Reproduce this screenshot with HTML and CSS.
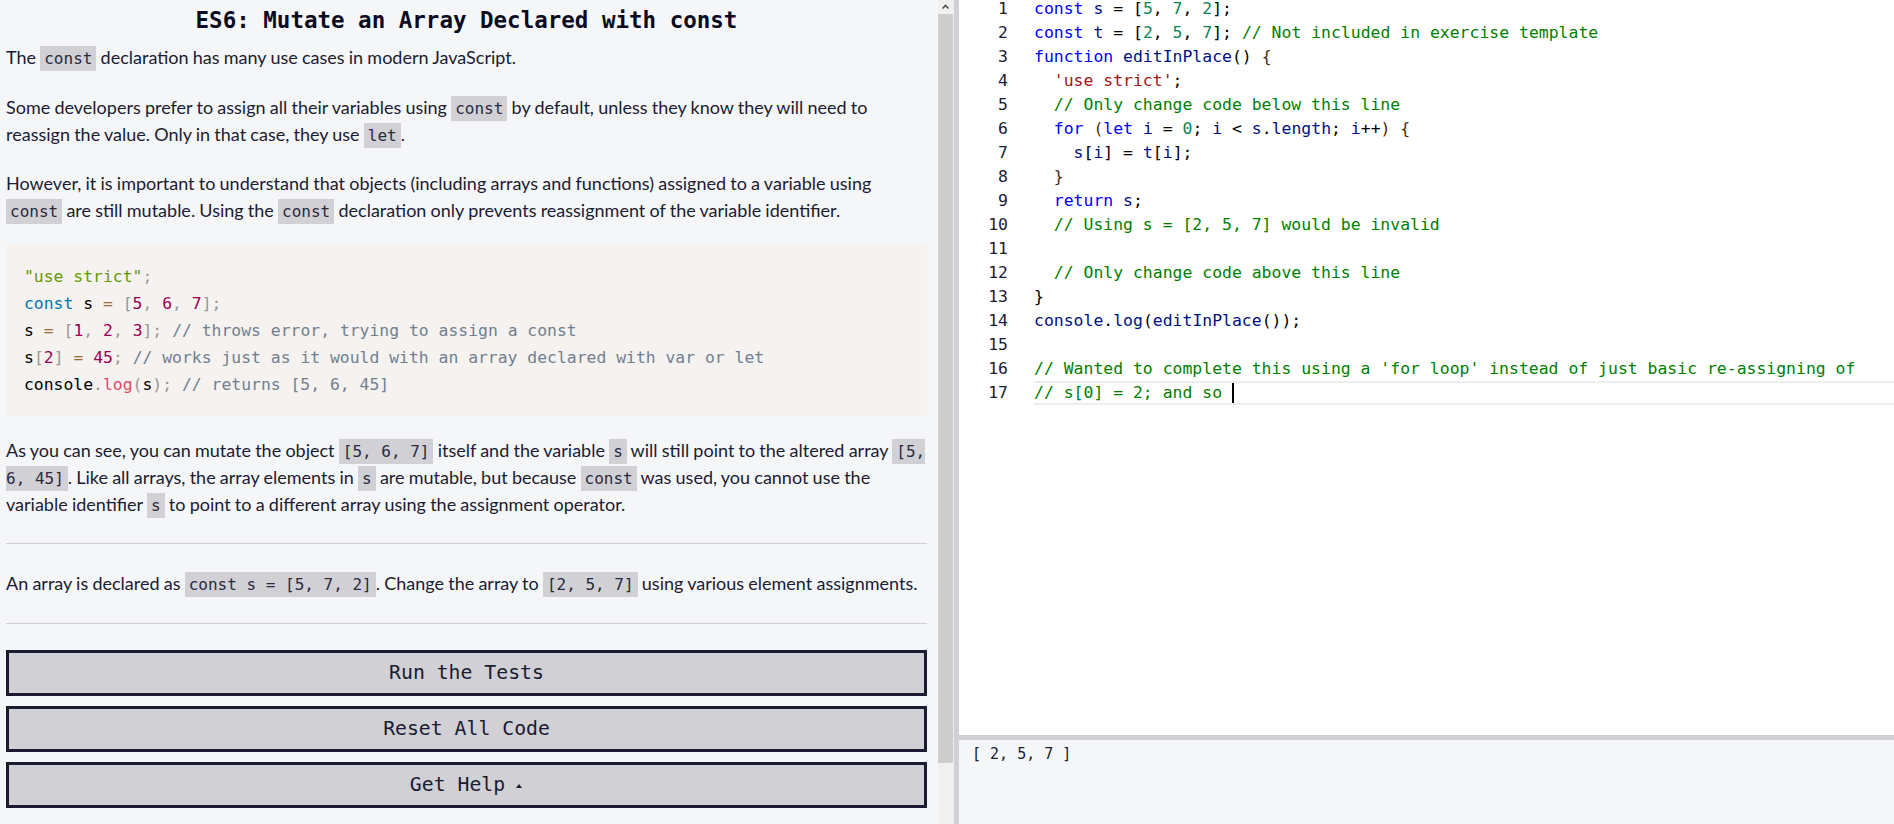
FILE: index.html
```html
<!DOCTYPE html>
<html lang="en">
<head>
<meta charset="utf-8">
<title>ES6: Mutate an Array Declared with const</title>
<link rel="stylesheet" href="styles.css">
</head>
<body>
<div class="app">
  <section class="instructions">
    <h1 class="title">ES6: Mutate an Array Declared with const</h1>
    <div class="desc">
      <p>The <code>const</code> declaration has many use cases in modern JavaScript.</p>
      <p>Some developers prefer to assign all their variables using <code>const</code> by default, unless they know they will need to reassign the value. Only in that case, they use <code>let</code>.</p>
      <p>However, it is important to understand that objects (including arrays and functions) assigned to a variable using <code>const</code> are still mutable. Using the <code>const</code> declaration only prevents reassignment of the variable identifier.</p>
<pre class="snippet"><span class="p-str">"use strict"</span><span class="p-pun">;</span>
<span class="p-kw">const</span> s <span class="p-op">=</span> <span class="p-pun">[</span><span class="p-num">5</span><span class="p-pun">,</span> <span class="p-num">6</span><span class="p-pun">,</span> <span class="p-num">7</span><span class="p-pun">];</span>
s <span class="p-op">=</span> <span class="p-pun">[</span><span class="p-num">1</span><span class="p-pun">,</span> <span class="p-num">2</span><span class="p-pun">,</span> <span class="p-num">3</span><span class="p-pun">];</span> <span class="p-com">// throws error, trying to assign a const</span>
s<span class="p-pun">[</span><span class="p-num">2</span><span class="p-pun">]</span> <span class="p-op">=</span> <span class="p-num">45</span><span class="p-pun">;</span> <span class="p-com">// works just as it would with an array declared with var or let</span>
console<span class="p-pun">.</span><span class="p-fn">log</span><span class="p-pun">(</span>s<span class="p-pun">);</span> <span class="p-com">// returns [5, 6, 45]</span></pre>
      <p>As you can see, you can mutate the object <code>[5, 6, 7]</code> itself and the variable <code>s</code> will still point to the altered array <code>[5, 6, 45]</code>. Like all arrays, the array elements in <code>s</code> are mutable, but because <code>const</code> was used, you cannot use the variable identifier <code>s</code> to point to a different array using the assignment operator.</p>
    </div>
    <hr class="rule">
    <p class="task">An array is declared as <code>const s = [5, 7, 2]</code>. Change the array to <code>[2, 5, 7]</code> using various element assignments.</p>
    <hr class="rule">
    <div class="actions">
      <button class="btn">Run the Tests</button>
      <button class="btn">Reset All Code</button>
      <button class="btn">Get Help <svg class="caret" width="8" height="6" viewBox="0 0 8 6"><path d="M4 1 L7 5 L1 5 Z" fill="#1b1b32"/></svg></button>
    </div>
  </section>

  <div class="vscroll">
    <div class="vscroll-up"><svg width="15" height="14" viewBox="0 0 15 14"><path d="M4.5 8.5 L7.5 5.5 L10.5 8.5" fill="none" stroke="#505050" stroke-width="1.6"/></svg></div>
    <div class="vscroll-thumb"></div>
    <div class="vscroll-track"></div>
  </div>
  <div class="split"></div>

  <section class="workspace">
    <div class="editor">
      <div class="lines">
        <div class="line"><span class="ln">1</span><span class="code"><span class="m-kw">const</span> <span class="m-id">s</span> = [<span class="m-num">5</span>, <span class="m-num">7</span>, <span class="m-num">2</span>];</span></div>
        <div class="line"><span class="ln">2</span><span class="code"><span class="m-kw">const</span> <span class="m-id">t</span> = [<span class="m-num">2</span>, <span class="m-num">5</span>, <span class="m-num">7</span>]; <span class="m-com">// Not included in exercise template</span></span></div>
        <div class="line"><span class="ln">3</span><span class="code"><span class="m-kw">function</span> <span class="m-id">editInPlace</span>() <span class="m-br">{</span></span></div>
        <div class="line"><span class="ln">4</span><span class="code">  <span class="m-str">'use strict'</span>;</span></div>
        <div class="line"><span class="ln">5</span><span class="code">  <span class="m-com">// Only change code below this line</span></span></div>
        <div class="line"><span class="ln">6</span><span class="code">  <span class="m-kw">for</span> <span class="m-br">(</span><span class="m-kw">let</span> <span class="m-id">i</span> = <span class="m-num">0</span>; <span class="m-id">i</span> &lt; <span class="m-id">s</span>.<span class="m-id">length</span>; <span class="m-id">i</span>++<span class="m-br">)</span> <span class="m-br">{</span></span></div>
        <div class="line"><span class="ln">7</span><span class="code">    <span class="m-id">s</span>[<span class="m-id">i</span>] = <span class="m-id">t</span>[<span class="m-id">i</span>];</span></div>
        <div class="line"><span class="ln">8</span><span class="code">  <span class="m-br">}</span></span></div>
        <div class="line"><span class="ln">9</span><span class="code">  <span class="m-kw">return</span> <span class="m-id">s</span>;</span></div>
        <div class="line"><span class="ln">10</span><span class="code">  <span class="m-com">// Using s = [2, 5, 7] would be invalid</span></span></div>
        <div class="line"><span class="ln">11</span><span class="code"></span></div>
        <div class="line"><span class="ln">12</span><span class="code">  <span class="m-com">// Only change code above this line</span></span></div>
        <div class="line"><span class="ln">13</span><span class="code">}</span></div>
        <div class="line"><span class="ln">14</span><span class="code"><span class="m-id">console</span>.<span class="m-id">log</span>(<span class="m-id">editInPlace</span>());</span></div>
        <div class="line"><span class="ln">15</span><span class="code"></span></div>
        <div class="line"><span class="ln">16</span><span class="code"><span class="m-com">// Wanted to complete this using a 'for loop' instead of just basic re-assigning of</span></span></div>
        <div class="line current"><span class="ln">17</span><span class="code"><span class="m-com">// s[0] = 2; and so </span><span class="cursor"></span></span></div>
      </div>
    </div>
    <div class="hsplit"></div>
    <div class="console"><pre class="console-out">[ 2, 5, 7 ]</pre></div>
  </section>
</div>
</body>
</html>
```

FILE: styles.css
```css
* { box-sizing: border-box; }

html, body {
  margin: 0;
  padding: 0;
  height: 100%;
}

body {
  font-family: Lato, "Noto Sans", sans-serif;
  font-size: 18px;
  color: #1b1b32;
  background: #f5f6f7;
  overflow: hidden;
}

.app {
  display: flex;
  height: 100vh;
}

/* ---------- left panel ---------- */
.instructions {
  width: 938px;
  flex: none;
  height: 100%;
  overflow: hidden;
  padding: 0 11px 0 6px;
  background: #f5f6f7;
}

.title {
  margin: 7px 0 10px;
  font-family: "DejaVu Sans Mono", monospace;
  font-size: 22.5px;
  line-height: 27px;
  font-weight: bold;
  text-align: center;
  color: #0a0a23;
}

.desc p,
.task {
  margin: 0 0 22.5px;
  line-height: 27px;
  word-spacing: -0.4px;
}

code {
  font-family: "DejaVu Sans Mono", monospace;
  font-size: 16px;
  line-height: 1;
  word-spacing: 0;
  background: #d0d0d5;
  color: #2a2a40;
  padding: 3px 4px;
}

.snippet {
  margin: -1.5px 0 21px;
  padding: 18px;
  background: #f5f2f0;
  font-family: "DejaVu Sans Mono", monospace;
  font-size: 16.4px;
  line-height: 27px;
  color: #000;
  white-space: pre;
  overflow: hidden;
}

.p-str { color: #669900; }
.p-kw  { color: #0077aa; }
.p-op  { color: #9a6e3a; }
.p-pun { color: #999999; }
.p-num { color: #990055; }
.p-com { color: #708090; }
.p-fn  { color: #dd4a68; }

.rule {
  border: none;
  height: 1px;
  background: #d0d0d5;
  margin: 24.5px 0 26px;
}

.task + .rule {
  margin: 26px 0 26px;
}

.actions {
  display: flex;
  flex-direction: column;
  gap: 10px;
}

.btn {
  display: flex;
  align-items: center;
  justify-content: center;
  gap: 10px;
  width: 100%;
  height: 46px;
  margin: 0;
  border: 3px solid #1b1b32;
  background: #d0d0d5;
  color: #1b1b32;
  font-family: "DejaVu Sans Mono", monospace;
  font-size: 19.8px;
  padding: 0;
}

.caret {
  margin-top: 2px;
}

/* ---------- fake scrollbar + splitters ---------- */
.vscroll {
  width: 15px;
  flex: none;
  display: flex;
  flex-direction: column;
  background: #f0f0f0;
}

.vscroll-up {
  height: 14px;
  flex: none;
}

.vscroll-up svg { display: block; }

.vscroll-thumb {
  height: 749px;
  flex: none;
  background: #cdcdcd;
}

.vscroll-track {
  flex: 1;
}

.split {
  width: 6px;
  flex: none;
  background: #d0d0d5;
  border-left: 1px solid #ececee;
}

/* ---------- editor ---------- */
.workspace {
  flex: 1;
  min-width: 0;
  display: flex;
  flex-direction: column;
}

.editor {
  height: 735px;
  flex: none;
  background: #ffffff;
  overflow: hidden;
}

.lines {
  margin-top: -3px;
  font-family: "DejaVu Sans Mono", monospace;
  font-size: 16.45px;
  line-height: 24px;
}

.line {
  display: flex;
  height: 24px;
}

.ln {
  width: 49px;
  flex: none;
  text-align: right;
  color: #1b1b32;
}

.code {
  flex: 1;
  margin-left: 26px;
  white-space: pre;
  color: #000000;
}

.current .code {
  box-shadow: inset 0 2px #eeeeee, inset 0 -2px #eeeeee;
}

.cursor {
  display: inline-block;
  width: 2px;
  height: 20px;
  background: #000;
  vertical-align: -5px;
}

.m-kw  { color: #0000ff; }
.m-id  { color: #001080; }
.m-num { color: #098658; }
.m-str { color: #a31515; }
.m-com { color: #008000; }
.m-br  { color: #4a2c14; }

.hsplit {
  height: 5px;
  flex: none;
  background: #d0d0d5;
}

.console {
  flex: 1;
  background: #f5f6f7;
  padding: 4px 13px;
}

.console-out {
  margin: 0;
  font-family: "DejaVu Sans Mono", monospace;
  font-size: 15px;
  line-height: 20px;
  color: #1b1b32;
}
```
